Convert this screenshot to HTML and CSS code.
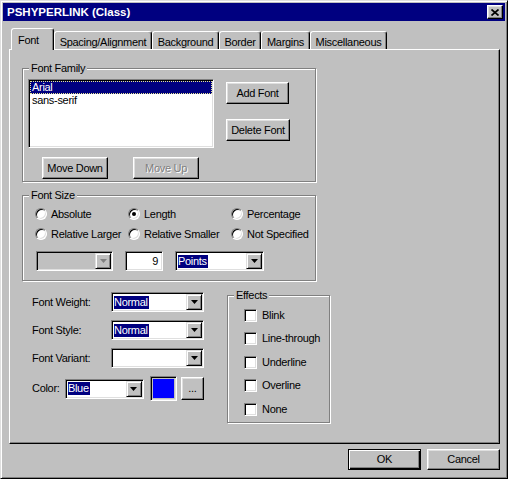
FILE: index.html
```html
<!DOCTYPE html>
<html>
<head>
<meta charset="utf-8">
<link rel="stylesheet" href="styles.css">
</head>
<body>
<div class="dialog">
  <div class="titlebar">
    <span class="title">PSHYPERLINK (Class)</span>
    <div class="close">
      <svg width="8" height="7" viewBox="0 0 8 7"><path d="M0.5 0.5 L7.5 6.5 M7.5 0.5 L0.5 6.5" stroke="#000" stroke-width="1.7" fill="none"/></svg>
    </div>
  </div>
  <div class="tabs">
    <div class="tab selected t-font">Font</div>
    <div class="tab t-spacing">Spacing/Alignment</div>
    <div class="tab t-background">Background</div>
    <div class="tab t-border">Border</div>
    <div class="tab t-margins">Margins</div>
    <div class="tab t-misc">Miscellaneous</div>
  </div>
  <div class="panel">
    <fieldset class="group family">
      <legend>Font Family</legend>
      <div class="family-body">
        <div class="family-top">
          <div class="listbox sunken">
            <div class="item selected">Arial</div>
            <div class="item">sans-serif</div>
          </div>
          <div class="family-buttons">
            <div class="btn add-font">Add Font</div>
            <div class="btn delete-font">Delete Font</div>
          </div>
        </div>
        <div class="family-bottom">
          <div class="btn move">Move Down</div>
          <div class="btn move disabled">Move Up</div>
        </div>
      </div>
    </fieldset>

    <fieldset class="group size">
      <legend>Font Size</legend>
      <div class="size-body">
        <div class="radios">
          <div class="opt"><span class="radio"></span>Absolute</div>
          <div class="opt"><span class="radio on"></span>Length</div>
          <div class="opt"><span class="radio"></span>Percentage</div>
          <div class="opt"><span class="radio"></span>Relative Larger</div>
          <div class="opt"><span class="radio"></span>Relative Smaller</div>
          <div class="opt"><span class="radio"></span>Not Specified</div>
        </div>
        <div class="size-fields">
          <div class="combo sunken disabled w-abs"><span class="combo-text"></span><span class="combo-arrow"><svg width="7" height="4" viewBox="0 0 7 4"><polygon points="0,0 7,0 3.5,4" fill="#808080"/></svg></span></div>
          <div class="textbox sunken">9</div>
          <div class="combo sunken w-units"><span class="combo-text"><span class="hl">Points</span></span><span class="combo-arrow"><svg width="7" height="4" viewBox="0 0 7 4"><polygon points="0,0 7,0 3.5,4" fill="#000"/></svg></span></div>
        </div>
      </div>
    </fieldset>

    <div class="lower">
      <div class="props">
        <div class="prop">
          <span class="prop-label">Font Weight:</span>
          <div class="combo sunken w-prop"><span class="combo-text"><span class="hl">Normal</span></span><span class="combo-arrow"><svg width="7" height="4" viewBox="0 0 7 4"><polygon points="0,0 7,0 3.5,4" fill="#000"/></svg></span></div>
        </div>
        <div class="prop">
          <span class="prop-label">Font Style:</span>
          <div class="combo sunken w-prop"><span class="combo-text"><span class="hl">Normal</span></span><span class="combo-arrow"><svg width="7" height="4" viewBox="0 0 7 4"><polygon points="0,0 7,0 3.5,4" fill="#000"/></svg></span></div>
        </div>
        <div class="prop">
          <span class="prop-label">Font Variant:</span>
          <div class="combo sunken w-prop"><span class="combo-text"></span><span class="combo-arrow"><svg width="7" height="4" viewBox="0 0 7 4"><polygon points="0,0 7,0 3.5,4" fill="#000"/></svg></span></div>
        </div>
        <div class="color-row">
          <span class="color-label">Color:</span>
          <div class="combo sunken w-color"><span class="combo-text"><span class="hl">Blue</span></span><span class="combo-arrow"><svg width="7" height="4" viewBox="0 0 7 4"><polygon points="0,0 7,0 3.5,4" fill="#000"/></svg></span></div>
          <div class="swatch"></div>
          <div class="btn dots">...</div>
        </div>
      </div>

      <fieldset class="group effects">
        <legend>Effects</legend>
        <div class="effects-body">
          <div class="check-row"><span class="checkbox"></span>Blink</div>
          <div class="check-row"><span class="checkbox"></span>Line-through</div>
          <div class="check-row"><span class="checkbox"></span>Underline</div>
          <div class="check-row"><span class="checkbox"></span>Overline</div>
          <div class="check-row"><span class="checkbox"></span>None</div>
        </div>
      </fieldset>
    </div>
  </div>
  <div class="footer">
    <div class="btn default footer-btn">OK</div>
    <div class="btn footer-btn">Cancel</div>
  </div>
</div>
</body>
</html>
```

FILE: styles.css
```css
* { box-sizing: border-box; }

html, body {
  margin: 0;
  padding: 0;
  background: #c0c0c0;
}

body {
  font-family: "Liberation Sans", Arial, sans-serif;
  font-size: 11px;
  letter-spacing: -0.3px;
  color: #000;
  line-height: 13px;
}

.dialog {
  width: 508px;
  height: 479px;
  background: #c0c0c0;
  border: 1px solid;
  border-color: #dfdfdf #000 #000 #dfdfdf;
  box-shadow: inset 1px 1px #fff, inset -1px -1px #808080;
  padding: 2px;
  display: flex;
  flex-direction: column;
}

/* title bar */
.titlebar {
  height: 18px;
  background: #000080;
  display: flex;
  align-items: center;
  justify-content: space-between;
  padding: 0 2px 0 4px;
}

.title {
  color: #fff;
  font-weight: bold;
  font-size: 11.5px;
  letter-spacing: 0;
}

.close {
  width: 16px;
  height: 14px;
  background: #c0c0c0;
  border: 1px solid;
  border-color: #fff #000 #000 #fff;
  box-shadow: inset -1px -1px #808080, inset 1px 1px #dfdfdf;
  display: flex;
  align-items: center;
  justify-content: center;
}

.close svg { display: block; }

/* tabs */
.tabs {
  display: flex;
  align-items: flex-end;
  margin: 7px 0 0 8px;
  height: 21px;
}

.tab {
  height: 18px;
  padding-top: 4px;
  text-align: center;
  white-space: nowrap;
  border: 1px solid;
  border-bottom: none;
  border-color: #fff #000 transparent #fff;
  border-radius: 3px 3px 0 0;
  box-shadow: inset -1px 0 #808080;
  background: #c0c0c0;
}

.tab.selected {
  height: 22px;
  padding-top: 5px;
  margin-bottom: -1px;
  position: relative;
  z-index: 1;
  text-align: left;
  padding-left: 6px;
}

.t-font { width: 43px; }
.t-spacing { width: 98px; }
.t-background { width: 67px; }
.t-border { width: 42px; }
.t-margins { width: 49px; }
.t-misc { width: 77px; }

/* panel */
.panel {
  height: 395px;
  margin: 0 5px 0 6px;
  border: 1px solid;
  border-color: #fff #000 #000 #fff;
  box-shadow: inset -1px -1px #808080;
}

/* group boxes */
.group {
  margin: 0;
  padding: 0;
  min-width: 0;
  border: 1px solid #808080;
  box-shadow: 1px 1px 0 #fff, inset 1px 1px 0 #fff;
}

.group legend {
  padding: 0 2px;
  margin-left: 6px;
  line-height: 13px;
  background: #c0c0c0;
}

.family {
  width: 294px;
  margin: 12px 0 0 12px;
}

.family-body {
  padding: 4px 0 2px 5px;
}

.family-top {
  display: flex;
}

.listbox {
  width: 186px;
  height: 69px;
  padding: 1px;
}

.item {
  height: 13px;
  line-height: 12px;
  padding-left: 2px;
}

.item.selected {
  background: #000080;
  color: #fff;
  outline: 1px dotted #e8e890;
  outline-offset: -1px;
}

.family-buttons {
  display: flex;
  flex-direction: column;
  margin-left: 12px;
}

.btn {
  display: flex;
  align-items: center;
  justify-content: center;
  background: #c0c0c0;
  border: 1px solid;
  border-color: #fff #000 #000 #fff;
  box-shadow: inset -1px -1px #808080, inset 1px 1px #dfdfdf;
  white-space: nowrap;
}

.add-font {
  width: 63px;
  height: 22px;
  margin-top: 3px;
}

.delete-font {
  width: 64px;
  height: 22px;
  margin-top: 15px;
}

.family-bottom {
  display: flex;
  gap: 25px;
  margin-top: 9px;
  padding-left: 14px;
}

.move {
  width: 66px;
  height: 22px;
}

.btn.disabled {
  color: #808080;
  text-shadow: 1px 1px 0 #fff;
}

/* font size */
.size {
  width: 294px;
  margin: 7px 0 0 12px;
}

.size-body {
  padding: 2px 0 9px 12px;
}

.radios {
  display: grid;
  grid-template-columns: 93px 103px 1fr;
  grid-auto-rows: 20px;
}

.opt {
  display: flex;
  align-items: center;
  white-space: nowrap;
}

.radio {
  width: 12px;
  height: 12px;
  flex: none;
  margin-right: 4px;
  border-radius: 50%;
  background: #fff;
  border: 1px solid;
  border-color: #808080 #fff #fff #808080;
  box-shadow: inset 1px 1px #000, inset -1px -1px #dfdfdf;
  display: flex;
  align-items: center;
  justify-content: center;
}

.radio.on::after {
  content: "";
  width: 4px;
  height: 4px;
  border-radius: 50%;
  background: #000;
}

.size-fields {
  display: flex;
  gap: 12px;
  margin-top: 7px;
  padding-left: 1px;
}

/* sunken fields */
.sunken {
  background: #fff;
  border: 1px solid;
  border-color: #808080 #fff #fff #808080;
  box-shadow: inset 1px 1px #000, inset -1px -1px #dfdfdf;
}

.combo {
  height: 20px;
  padding: 1px;
  display: flex;
}

.combo.disabled { background: #c0c0c0; }

.combo-text {
  flex: 1;
  display: flex;
  align-items: center;
  padding-left: 1px;
  overflow: hidden;
}

.hl {
  background: #000080;
  color: #fff;
  line-height: 13px;
  padding-right: 1px;
}

.combo-arrow {
  width: 16px;
  height: 16px;
  flex: none;
  background: #c0c0c0;
  border: 1px solid;
  border-color: #dfdfdf #000 #000 #dfdfdf;
  box-shadow: inset 1px 1px #fff, inset -1px -1px #808080;
  display: flex;
  align-items: center;
  justify-content: center;
}

.combo-arrow svg { display: block; }

.w-abs { width: 77px; }
.w-units { width: 89px; }
.w-prop { width: 93px; }
.w-color { width: 81px; }

.textbox {
  width: 38px;
  height: 20px;
  text-align: right;
  padding: 3px 4px 0 0;
}

/* lower part */
.lower {
  display: flex;
  align-items: flex-start;
}

.props {
  margin-left: 22px;
  padding-top: 11px;
  width: 172px;
}

.prop {
  display: flex;
  align-items: center;
  height: 20px;
  margin-bottom: 8px;
}

.prop-label {
  width: 79px;
  white-space: nowrap;
}

.color-row {
  display: flex;
  align-items: center;
  height: 25px;
  margin-top: 3px;
}

.color-label {
  width: 34px;
}

.swatch {
  width: 28px;
  height: 25px;
  margin-left: 6px;
  background: #0000ff;
  border: 1px solid;
  border-color: #808080 #fff #fff #808080;
  box-shadow: inset 1px 1px #000, inset -1px -1px #dfdfdf, inset 2px 2px #c0c0c0, inset -2px -2px #c0c0c0;
}

.dots {
  width: 24px;
  height: 23px;
  margin-left: 4px;
  padding-bottom: 1px;
}

.effects {
  width: 103px;
  margin: 8px 0 0 23px;
}

.effects-body {
  padding: 1.5px 0 1px 16px;
}

.check-row {
  height: 23.5px;
  display: flex;
  align-items: center;
  white-space: nowrap;
}

.checkbox {
  width: 13px;
  height: 13px;
  flex: none;
  margin-right: 5px;
  background: #fff;
  border: 1px solid;
  border-color: #808080 #fff #fff #808080;
  box-shadow: inset 1px 1px #000, inset -1px -1px #dfdfdf;
}

/* footer */
.footer {
  display: flex;
  justify-content: flex-end;
  gap: 6px;
  margin-top: 5px;
  padding-right: 5px;
}

.footer-btn {
  width: 73px;
  height: 21px;
}

.btn.default {
  border-color: #000;
  box-shadow: inset 1px 1px #fff, inset -1px -1px #000, inset -2px -2px #808080;
}
```
